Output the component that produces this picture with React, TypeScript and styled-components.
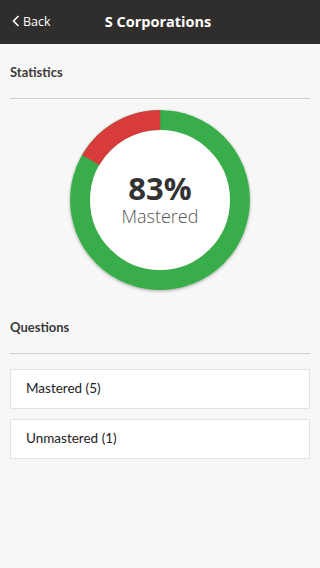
import React from "react";
import styled, { createGlobalStyle } from "styled-components";

const GlobalStyle = createGlobalStyle`
  html, body {
    margin: 0;
    padding: 0;
    background: #f7f7f7;
  }
  * {
    box-sizing: border-box;
  }
`;

const Page = styled.div`
  width: 320px;
  min-height: 568px;
  background: #f7f7f7;
  font-family: "Lato", "Open Sans", sans-serif;
`;

const Header = styled.header`
  height: 44px;
  background: #302e2c;
  display: grid;
  grid-template-columns: 80px 1fr 80px;
  align-items: center;
  color: #fff;
`;

const BackButton = styled.div`
  display: flex;
  align-items: center;
  gap: 3px;
  padding-left: 12px;
  font-family: "Open Sans", sans-serif;
  font-size: 12.5px;
  margin-top: -2px;
`;

const Title = styled.h1`
  margin: 0;
  text-align: center;
  font-family: "Open Sans", sans-serif;
  font-weight: 700;
  font-size: 14.5px;
  margin-top: -1px;
  margin-left: -4px;
`;

const Section = styled.section`
  padding: 0 10px;
`;

const SectionTitle = styled.h2<{ $top: number }>`
  margin: 0;
  padding-top: ${(p) => p.$top}px;
  font-size: 13px;
  line-height: 16px;
  font-weight: 700;
  color: #3a3a3a;
`;

const Divider = styled.hr`
  margin: 18px 0 0;
  border: 0;
  border-top: 1px solid #cfcfcf;
  height: 0;
`;

const ChartWrap = styled.div`
  margin: 10px auto 0;
  width: 182px;
  height: 182px;
  position: relative;
  display: flex;
  align-items: center;
  justify-content: center;
`;

const ChartSvg = styled.svg`
  position: absolute;
  inset: 0;
  filter: drop-shadow(0 1px 1.5px rgba(0, 0, 0, 0.3));
`;

const ChartLabel = styled.div`
  position: relative;
  display: flex;
  flex-direction: column;
  align-items: center;
  gap: 3px;
  font-family: "Open Sans", sans-serif;
  color: #333;
  margin-top: -1px;
`;

const Percent = styled.div`
  font-weight: 700;
  font-size: 31px;
  line-height: 29px;
`;

const Caption = styled.div`
  font-weight: 300;
  font-size: 18px;
  line-height: 20px;
  color: #555;
`;

const List = styled.div`
  margin-top: 15px;
  display: flex;
  flex-direction: column;
  gap: 10px;
`;

const ListItem = styled.div`
  height: 40px;
  background: #fff;
  border: 1px solid #e2e2e2;
  display: flex;
  align-items: center;
  padding: 0 0 2px 15px;
  font-size: 13.5px;
  color: #222;
`;

const Chevron = () => (
  <svg width="8" height="12" viewBox="0 0 8 12">
    <path d="M6.5 1 L1.5 6 L6.5 11" fill="none" stroke="#fff" strokeWidth="1.6" />
  </svg>
);

const Donut = ({ pct }: { pct: number }) => {
  const r = 80;
  const c = 2 * Math.PI * r;
  const bad = c * (1 - pct);
  return (
    <ChartSvg width="182" height="182" viewBox="0 0 182 182">
      <circle cx="91" cy="91" r="90" fill="#fff" />
      <circle cx="91" cy="91" r={r} fill="none" stroke="#39ad4a" strokeWidth="20" />
      <circle
        cx="91"
        cy="91"
        r={r}
        fill="none"
        stroke="#d83b3c"
        strokeWidth="20"
        strokeDasharray={`${bad} ${c}`}
        transform={`rotate(${-90 - (1 - pct) * 360} 91 91)`}
      />
    </ChartSvg>
  );
};

export default function App() {
  const mastered = 5;
  const unmastered = 1;
  const pct = mastered / (mastered + unmastered);
  return (
    <Page>
      <GlobalStyle />
      <Header>
        <BackButton>
          <Chevron />
          Back
        </BackButton>
        <Title>S Corporations</Title>
        <div />
      </Header>
      <Section>
        <SectionTitle $top={20}>Statistics</SectionTitle>
        <Divider />
        <ChartWrap>
          <Donut pct={pct} />
          <ChartLabel>
            <Percent>{Math.round(pct * 100)}%</Percent>
            <Caption>Mastered</Caption>
          </ChartLabel>
        </ChartWrap>
        <SectionTitle $top={28}>Questions</SectionTitle>
        <Divider />
        <List>
          <ListItem>Mastered ({mastered})</ListItem>
          <ListItem>Unmastered ({unmastered})</ListItem>
        </List>
      </Section>
    </Page>
  );
}
